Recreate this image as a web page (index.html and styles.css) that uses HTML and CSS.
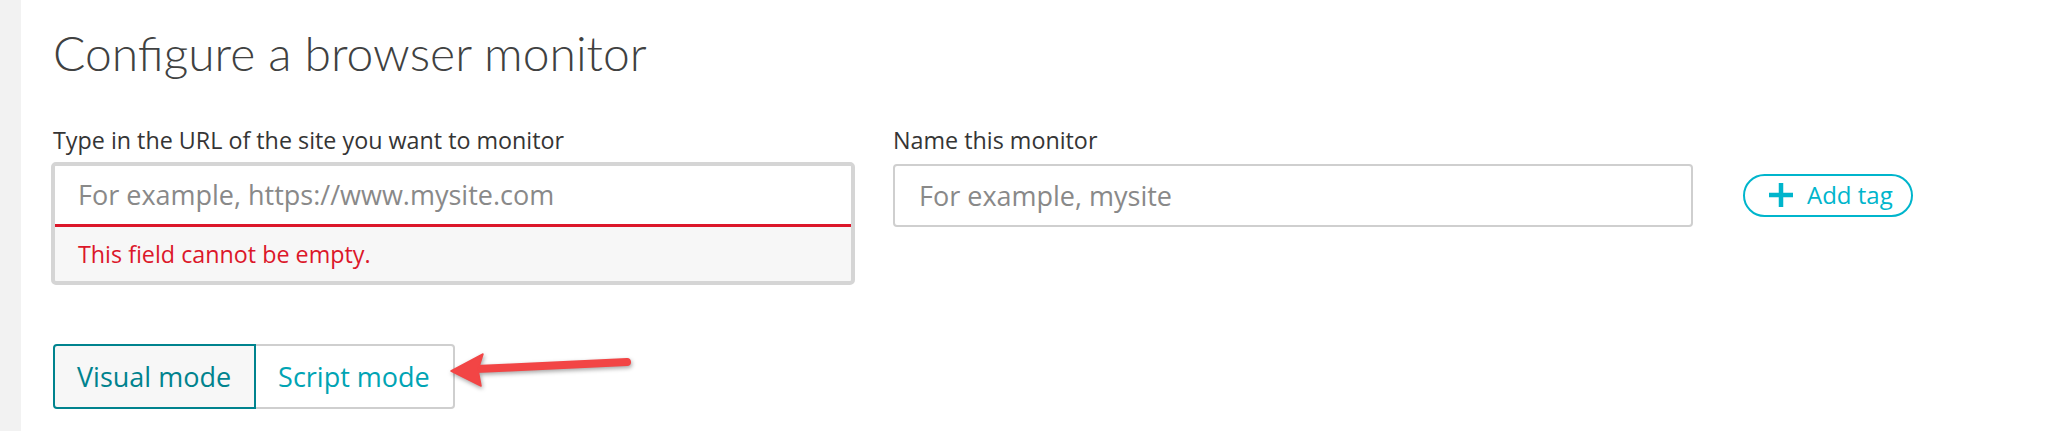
FILE: index.html
```html
<!DOCTYPE html>
<html lang="en">
<head>
<meta charset="utf-8">
<title>Configure a browser monitor</title>
<link rel="stylesheet" href="styles.css">
</head>
<body>
<div class="app">
  <aside class="rail"></aside>
  <main class="content">
    <h1 class="title">Configure a browser monitor</h1>
    <div class="form-grid">
      <div class="label label-url">Type in the URL of the site you want to monitor</div>
      <div class="label label-name">Name this monitor</div>
      <div class="url-box">
        <div class="url-input"><span class="placeholder">For example, https://www.mysite.com</span></div>
        <div class="url-error">This field cannot be empty.</div>
      </div>
      <div class="name-input"><span class="placeholder">For example, mysite</span></div>
      <button class="add-tag" type="button">
        <svg class="plus" viewBox="0 0 24 24" width="24" height="24" aria-hidden="true"><path d="M12 0v24M0 12h24" stroke="currentColor" stroke-width="4.5" fill="none"/></svg>
        <span>Add tag</span>
      </button>
    </div>
    <div class="modes">
      <button class="mode mode-active" type="button">Visual mode</button>
      <button class="mode mode-inactive" type="button">Script mode</button>
    </div>
  </main>
  <svg class="arrow" viewBox="0 0 200 60" width="200" height="60" aria-hidden="true">
    <line x1="187" y1="22" x2="36" y2="29" stroke="#f24545" stroke-width="8" stroke-linecap="round"/>
    <path d="M11 31 L43 14 L38 30 L41 46 Z" fill="#f24545" stroke="#f24545" stroke-width="1.5" stroke-linejoin="round"/>
  </svg>
</div>
</body>
</html>
```

FILE: styles.css
```css
html, body {
  margin: 0;
  height: 100%;
}

body {
  font-family: "Open Sans", "Noto Sans", sans-serif;
  background: #ffffff;
  color: #353535;
}

.app {
  position: relative;
  display: flex;
  min-height: 100vh;
}

.rail {
  flex: none;
  width: 21px;
  background: #f2f2f2;
}

.content {
  flex: 1;
  padding: 24px 0 0 32px;
}

.title {
  margin: 0 0 45px;
  font-family: Lato, "Open Sans", sans-serif;
  font-weight: 300;
  font-size: 48px;
  line-height: 1.2;
  color: #404141;
}

.form-grid {
  display: grid;
  grid-template-columns: 800px 800px auto;
  column-gap: 40px;
  row-gap: 10px;
  align-items: start;
}

.label {
  font-size: 23.3px;
  line-height: 27px;
  color: #353535;
}

.label-url { grid-column: 1; grid-row: 1; }
.label-name { grid-column: 2; grid-row: 1; }

.url-box {
  grid-column: 1;
  grid-row: 2;
  margin: -2px -2px 0;
  border: 4px solid #d5d5d5;
  border-radius: 5px;
  background: #f7f7f7;
  overflow: hidden;
}

.url-input {
  display: flex;
  align-items: center;
  height: 58px;
  padding: 0 23px;
  background: #ffffff;
  border-bottom: 3px solid #dc172a;
}

.placeholder {
  font-size: 27px;
  color: #898989;
}

.url-error {
  display: flex;
  align-items: center;
  height: 54px;
  padding: 0 23px;
  font-size: 23.3px;
  color: #dc172a;
}

.name-input {
  grid-column: 2;
  grid-row: 2;
  box-sizing: border-box;
  display: flex;
  align-items: center;
  height: 63px;
  padding: 0 24px;
  border: 2px solid #cfcfcf;
  border-radius: 4px;
  background: #ffffff;
}

.add-tag {
  grid-column: 3;
  grid-row: 2;
  justify-self: start;
  box-sizing: border-box;
  display: inline-flex;
  align-items: center;
  gap: 14px;
  height: 43px;
  margin: 10px 0 0 10px;
  padding: 0 18px 0 24px;
  border: 2px solid #00b5cc;
  border-radius: 22px;
  background: #ffffff;
  color: #00b5cc;
  font-family: inherit;
  font-size: 24px;
  line-height: 1;
  cursor: pointer;
}

.plus {
  display: block;
  flex: none;
}

.modes {
  display: inline-flex;
  margin-top: 59px;
}

.mode {
  box-sizing: border-box;
  display: flex;
  align-items: center;
  height: 65px;
  padding: 0 23px 0 22px;
  font-family: inherit;
  font-size: 27px;
  line-height: 1;
  cursor: pointer;
}

.mode-active {
  border: 2px solid #00838e;
  border-radius: 4px 0 0 4px;
  background: #f7f7f7;
  color: #00838e;
}

.mode-inactive {
  border: 2px solid #cfcfcf;
  border-left: 0;
  border-radius: 0 4px 4px 0;
  background: #ffffff;
  color: #00a4b4;
}

.arrow {
  position: absolute;
  left: 440px;
  top: 340px;
  filter: drop-shadow(1px 2px 2px rgba(0, 0, 0, 0.35));
}
```
